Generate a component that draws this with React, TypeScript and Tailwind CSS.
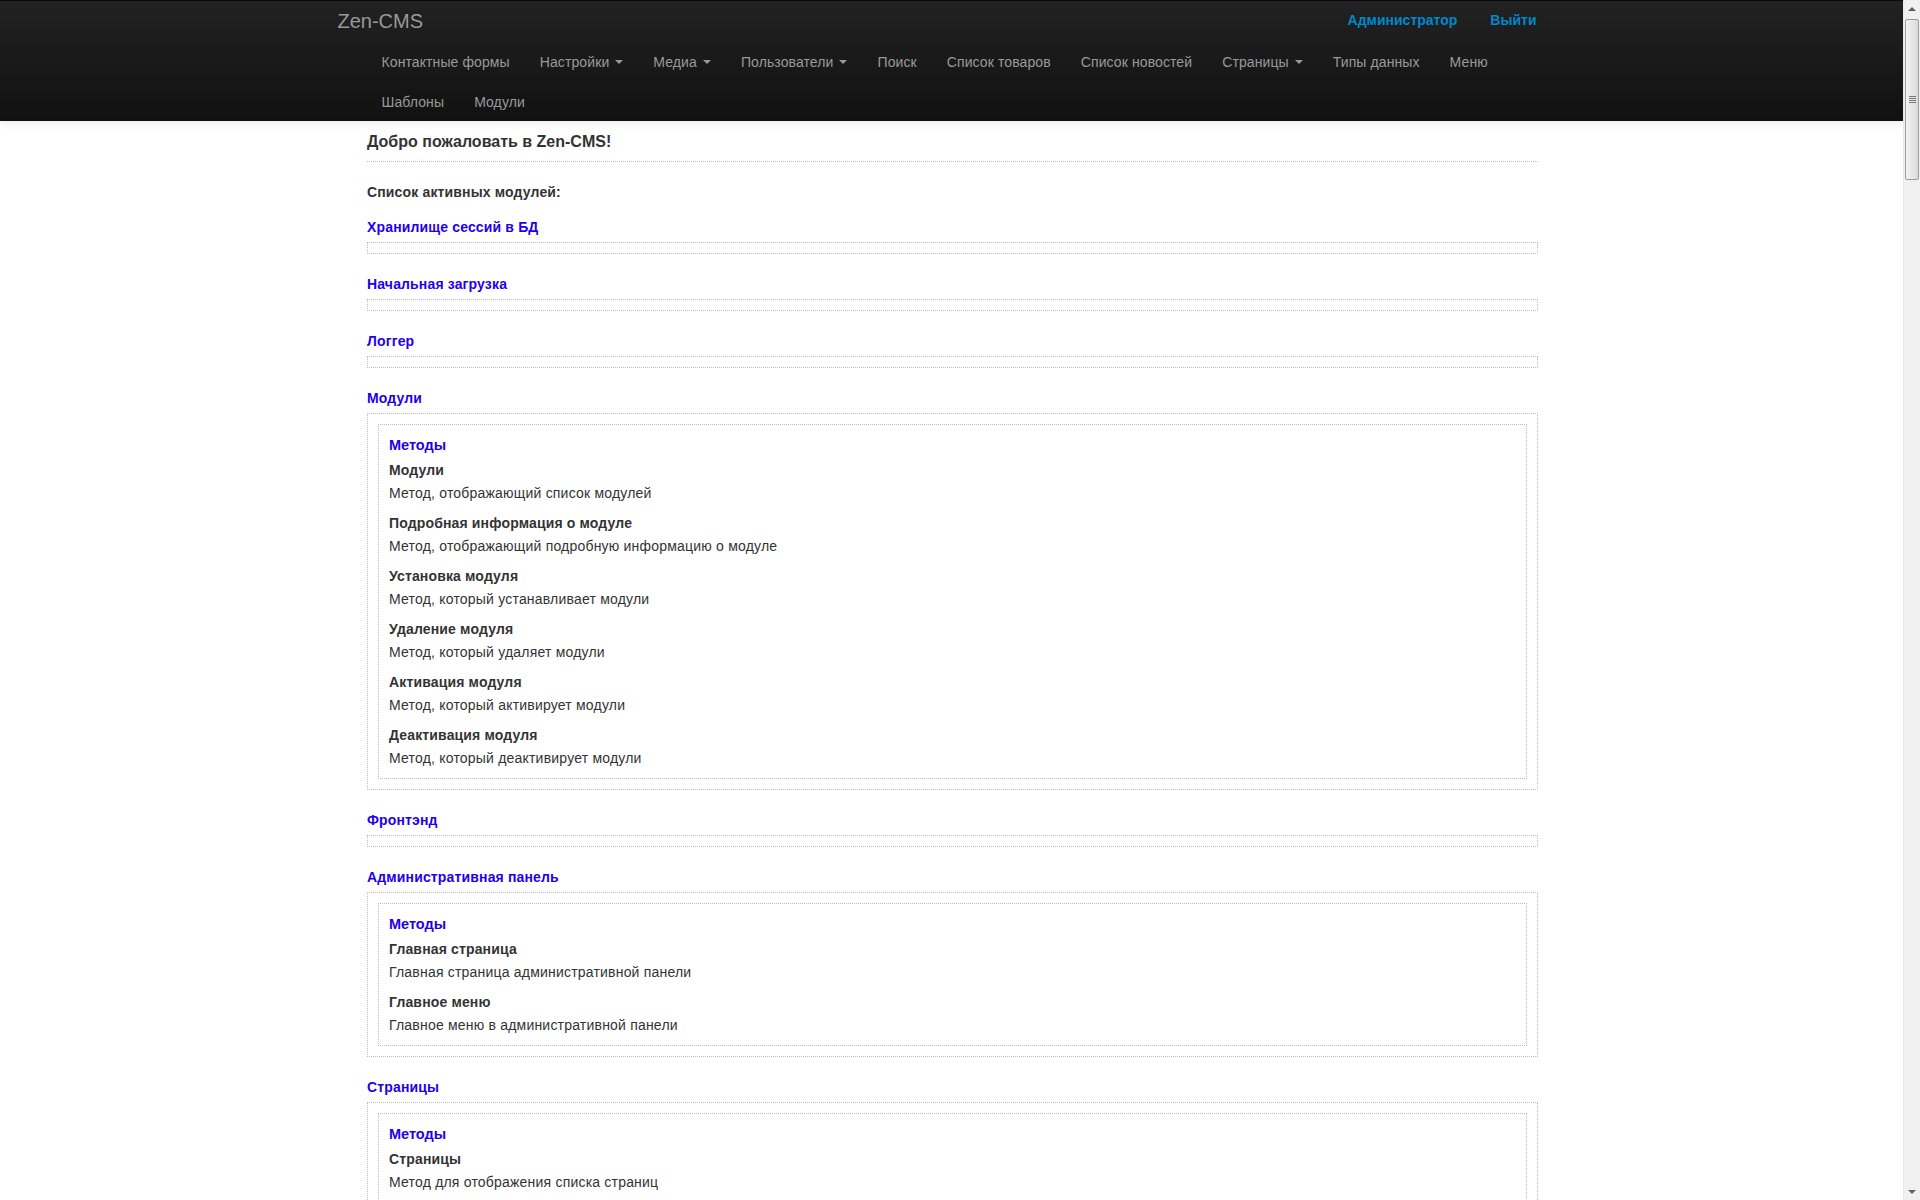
import React from 'react'

type Method = [string, string]
type Module = { title: string; methods: Method[] }

const menuRow1: { label: string; caret?: boolean }[] = [
  { label: 'Контактные формы' },
  { label: 'Настройки', caret: true },
  { label: 'Медиа', caret: true },
  { label: 'Пользователи', caret: true },
  { label: 'Поиск' },
  { label: 'Список товаров' },
  { label: 'Список новостей' },
  { label: 'Страницы', caret: true },
  { label: 'Типы данных' },
  { label: 'Меню' },
]

const menuRow2 = ['Шаблоны', 'Модули']

const modules: Module[] = [
  { title: 'Хранилище сессий в БД', methods: [] },
  { title: 'Начальная загрузка', methods: [] },
  { title: 'Логгер', methods: [] },
  {
    title: 'Модули',
    methods: [
      ['Модули', 'Метод, отображающий список модулей'],
      ['Подробная информация о модуле', 'Метод, отображающий подробную информацию о модуле'],
      ['Установка модуля', 'Метод, который устанавливает модули'],
      ['Удаление модуля', 'Метод, который удаляет модули'],
      ['Активация модуля', 'Метод, который активирует модули'],
      ['Деактивация модуля', 'Метод, который деактивирует модули'],
    ],
  },
  { title: 'Фронтэнд', methods: [] },
  {
    title: 'Административная панель',
    methods: [
      ['Главная страница', 'Главная страница административной панели'],
      ['Главное меню', 'Главное меню в административной панели'],
    ],
  },
  {
    title: 'Страницы',
    methods: [['Страницы', 'Метод для отображения списка страниц']],
  },
]

function Caret() {
  return (
    <span className="ml-[2px] mt-[8px] inline-block h-0 w-0 border-x-[4px] border-t-[4px] border-x-transparent border-t-[#999] align-top" />
  )
}

function NavLink({ label, caret }: { label: string; caret?: boolean }) {
  return (
    <a className="block whitespace-pre px-[15px] py-[10px] text-[14px] leading-5 tracking-[0.1px] text-[#999]">
      {caret ? label + ' ' : label}
      {caret && <Caret />}
    </a>
  )
}

function Navbar() {
  return (
    <div className="h-[121px] border-t border-[#0a0a0a] bg-gradient-to-b from-[#222] to-[#111] shadow-[0_1px_10px_rgba(0,0,0,0.1)]">
      <div className="mx-auto w-[1170px]">
        <div className="flex h-[41px] items-start justify-between">
          <a className="-ml-[29px] pt-[10px] text-[20px] leading-5 text-[#999]">Zen-CMS</a>
          <div className="flex pt-[9px] text-[14px] font-bold leading-5 text-[#0088cc]">
            <a className="pr-[33px]">Администратор</a>
            <a>Выйти</a>
          </div>
        </div>
        <div className="flex h-10">
          {menuRow1.map((m) => (
            <NavLink key={m.label} label={m.label} caret={m.caret} />
          ))}
        </div>
        <div className="flex h-[39px]">
          {menuRow2.map((m) => (
            <NavLink key={m} label={m} />
          ))}
        </div>
      </div>
    </div>
  )
}

function ModuleBlock({ mod }: { mod: Module }) {
  return (
    <div className="mt-[20px] first:mt-[15px]">
      <a className="block text-[14px] font-bold leading-5 tracking-[0.15px] text-[#1f00ee]">{mod.title}</a>
      {mod.methods.length === 0 ? (
        <div className="mt-[5px] h-[12px] border border-dotted border-[#bbb]" />
      ) : (
        <div className="mt-[5px] border border-dotted border-[#bbb] p-[10px]">
          <div className="border border-dotted border-[#bbb] p-[10px]">
            <a className="block text-[14.5px] font-bold leading-5 text-[#1f00ee]">Методы</a>
            {mod.methods.map(([name, desc], i) => (
              <div key={name} className={i === 0 ? 'mt-[5px]' : 'mt-[10px]'}>
                <div className="text-[14px] font-bold leading-5 tracking-[0.15px] text-[#333]">{name}</div>
                <div className="mt-[3px] text-[14px] leading-5 tracking-[0.2px] text-[#333]">{desc}</div>
              </div>
            ))}
          </div>
        </div>
      )}
    </div>
  )
}

function Scrollbar() {
  return (
    <div className="flex h-full w-[17px] flex-col border-l border-[#e8e8e8] bg-[#f0f0f0]">
      <div className="flex h-[17px] items-center justify-center">
        <span className="inline-block h-0 w-0 border-x-[4px] border-b-[4px] border-x-transparent border-b-[#606060]" />
      </div>
      <div className="mx-[1px] mt-[2px] flex h-[161px] items-center justify-center rounded-[2px] border border-[#9c9c9c] bg-gradient-to-r from-[#f4f4f4] to-[#dadada]">
        <div className="flex w-[7px] flex-col gap-[1px]">
          <span className="h-px bg-[#777]" />
          <span className="h-px bg-[#777]" />
          <span className="h-px bg-[#777]" />
          <span className="h-px bg-[#777]" />
        </div>
      </div>
      <div className="flex-1" />
      <div className="flex h-[17px] items-center justify-center">
        <span className="inline-block h-0 w-0 border-x-[4px] border-t-[4px] border-x-transparent border-t-[#606060]" />
      </div>
    </div>
  )
}

export default function App() {
  return (
    <div className="flex h-[1200px] w-[1920px] overflow-hidden bg-white font-['Liberation_Sans',Arial,sans-serif] text-[#333]">
      <div className="h-full flex-1 overflow-hidden">
        <Navbar />
        <div className="mx-auto w-[1173px] pl-[2px] pt-[11px]">
          <h4 className="border-b border-dotted border-[#bbb] pb-[9px] text-[16px] font-bold leading-5 text-[#333]">
            Добро пожаловать в Zen-CMS!
          </h4>
          <div className="mt-[20px] text-[14px] font-bold leading-5 tracking-[0.15px] text-[#333]">
            Список активных модулей:
          </div>
          <div>
            {modules.map((m) => (
              <ModuleBlock key={m.title} mod={m} />
            ))}
          </div>
        </div>
      </div>
      <Scrollbar />
    </div>
  )
}
